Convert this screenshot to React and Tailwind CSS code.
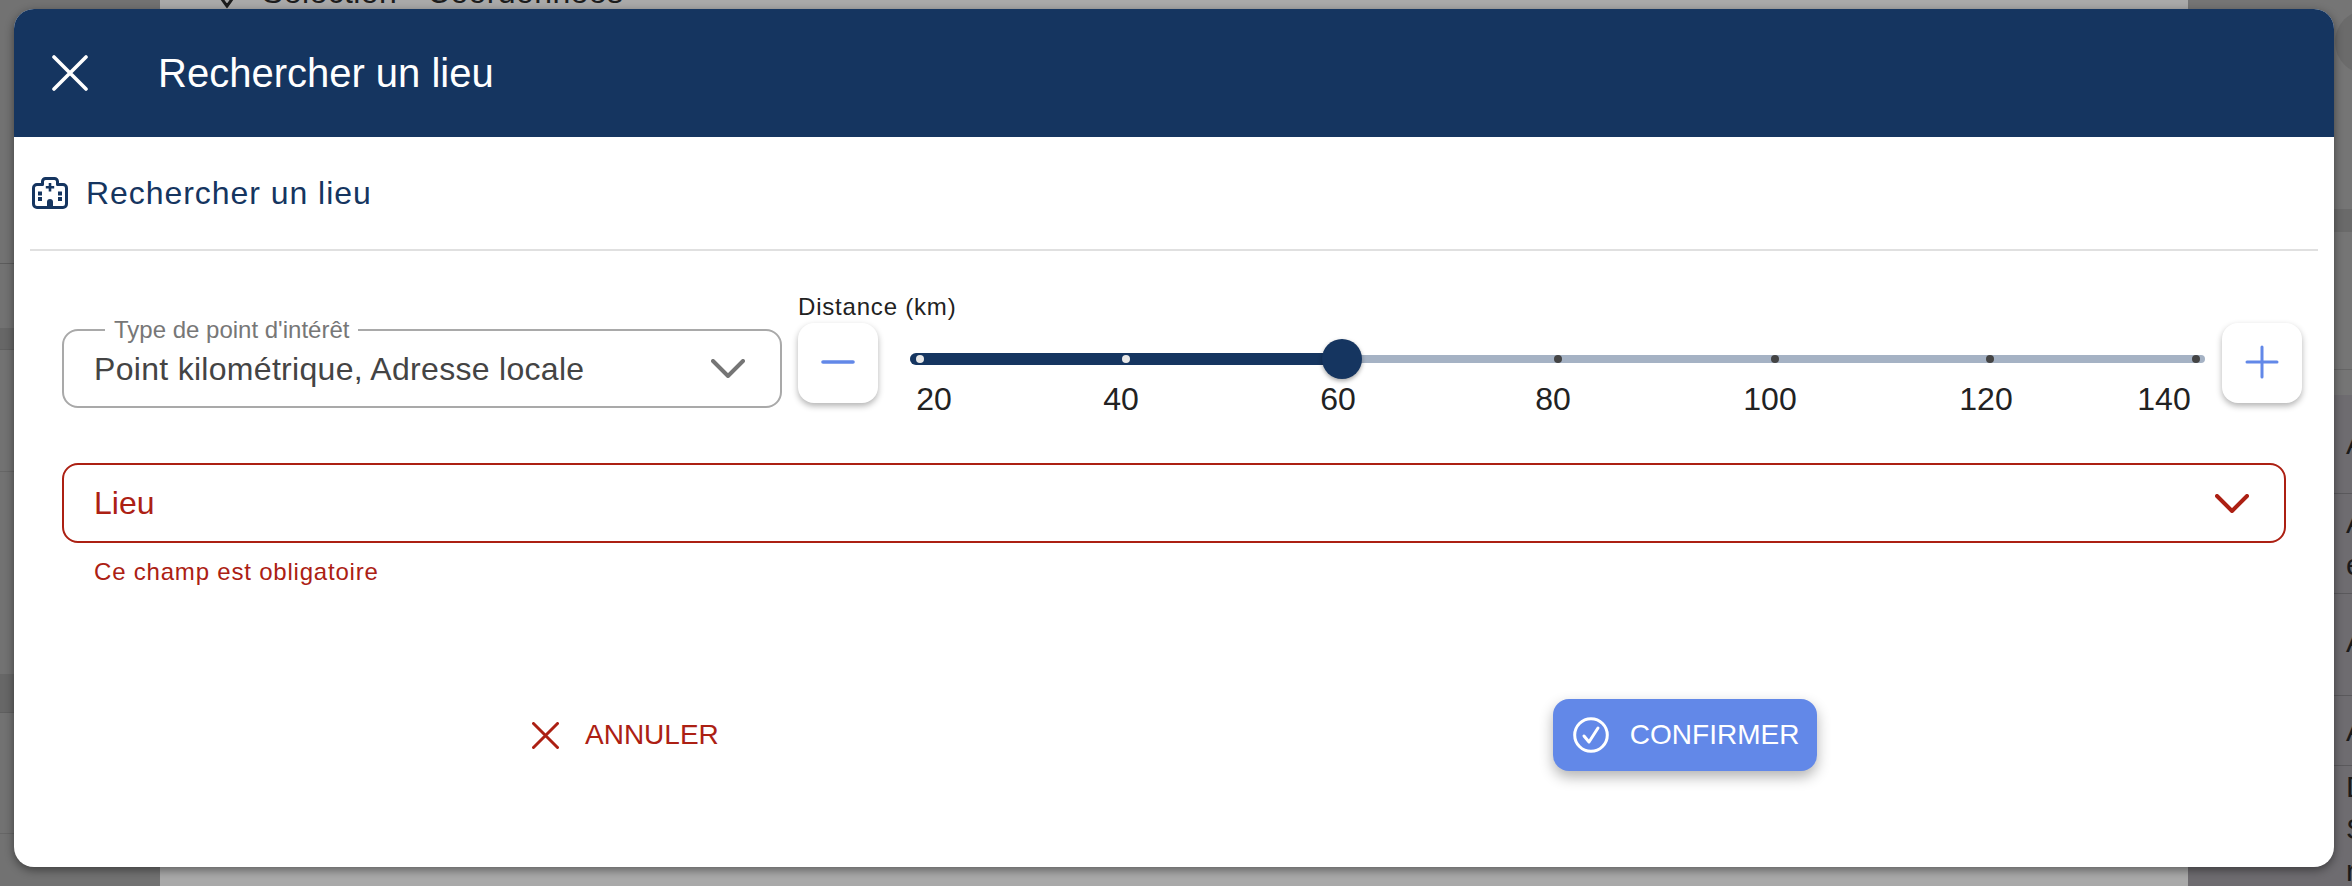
const marks = [
  { value: 20, dot: 10, label: 24, active: true },
  { value: 40, dot: 216, label: 211, active: true },
  { value: 60, dot: 432, label: 428, active: true },
  { value: 80, dot: 648, label: 643 },
  { value: 100, dot: 865, label: 860 },
  { value: 120, dot: 1080, label: 1076 },
  { value: 140, dot: 1286, label: 1254 },
];

function Chevron({ className }) {
  return (
    <svg width="34" height="19" viewBox="0 0 34 19" fill="none" className={className}>
      <path d="M2 2 L17 17 L32 2" stroke="currentColor" strokeWidth="4" strokeLinecap="round" strokeLinejoin="round" />
    </svg>
  );
}

function Cross({ size, width, className }) {
  return (
    <svg width={size} height={size} viewBox="0 0 36 36" fill="none" className={className}>
      <path d="M2 2 L34 34 M34 2 L2 34" stroke="currentColor" strokeWidth={width} strokeLinecap="round" />
    </svg>
  );
}

function HospitalIcon() {
  return (
    <svg width="36" height="32" viewBox="0 0 36 32" fill="none" className="text-[#153560]">
      <path
        d="M10.5 7.5 V4.5 a3 3 0 0 1 3-3 H22.5 a3 3 0 0 1 3 3 V7.5 H31 a3.5 3.5 0 0 1 3.5 3.5 V27 a3.5 3.5 0 0 1-3.5 3.5 H5 a3.5 3.5 0 0 1-3.5-3.5 V11 a3.5 3.5 0 0 1 3.5-3.5 Z"
        stroke="currentColor"
        strokeWidth="3"
        strokeLinejoin="round"
      />
      <path d="M18 6 V14.5 M13.8 10.3 H22.2" stroke="currentColor" strokeWidth="2.6" />
      <path d="M15 31 V25 a3 3 0 0 1 6 0 V31 Z" fill="currentColor" />
      <rect x="6" y="14.5" width="4" height="4" fill="currentColor" />
      <rect x="6" y="20" width="4" height="4" fill="currentColor" />
      <rect x="26" y="14.5" width="4" height="4" fill="currentColor" />
      <rect x="26" y="20" width="4" height="4" fill="currentColor" />
    </svg>
  );
}

function StepButton({ children }) {
  return (
    <button className="w-[80px] h-[80px] shrink-0 flex items-center justify-center rounded-[16px] bg-white text-[#6288e8] shadow-[0_3px_6px_rgba(0,0,0,0.3)]">
      {children}
    </button>
  );
}

function Slider() {
  return (
    <div className="relative flex-1 h-[80px] ml-[32px] mr-[15px]">
      <div className="absolute left-0 right-0 top-[32px] h-[8px] rounded-full bg-[#a5b2c4]" />
      <div className="absolute left-0 w-[432px] top-[30px] h-[12px] rounded-l-full bg-[#153560]" />
      {marks.map((mark) => (
        <div key={mark.value}>
          <div
            className={`absolute top-[32px] w-[8px] h-[8px] -translate-x-1/2 rounded-full ${
              mark.active ? "bg-[#e8e8e8]" : "bg-[#444444]"
            }`}
            style={{ left: mark.dot }}
          />
          <span
            className="absolute top-[58px] -translate-x-1/2 text-[32px] leading-[36px] text-[#222222]"
            style={{ left: mark.label }}
          >
            {mark.value}
          </span>
        </div>
      ))}
      <div className="absolute left-[432px] top-[16px] w-[40px] h-[40px] -translate-x-1/2 rounded-full bg-[#153560] shadow-[0_2px_4px_rgba(0,0,0,0.35)]" />
    </div>
  );
}

function Backdrop() {
  return (
    <div className="flex h-[886px] overflow-hidden">
      <div className="w-[160px] flex flex-col bg-[#727272]">
        <div className="h-[264px] shrink-0 border-b border-[#5c5c5c]" />
        <div className="h-[64px] shrink-0" />
        <div className="h-[22px] shrink-0 bg-[#676767] border-b border-[#5f5f5f]" />
        <div className="h-[122px] shrink-0 border-b border-[#666666]" />
        <div className="h-[202px] shrink-0" />
        <div className="h-[39px] shrink-0 bg-[#676767] border-b border-[#5f5f5f]" />
        <div className="h-[121px] shrink-0 border-b border-[#666666]" />
      </div>
      <div className="flex-1 bg-[#a9a9a9]">
        <div className="flex items-center gap-[22px] pl-[54px] -mt-[28px] h-[40px] text-[32px] tracking-[0.4px] text-[#1c1c1c]">
          <svg width="26" height="36" viewBox="0 0 26 36" fill="none" className="-mt-[2px]">
            <path d="M13 33 C6 24 2 18 2 12 a11 11 0 0 1 22 0 C24 18 20 24 13 33 Z" stroke="currentColor" strokeWidth="3" />
          </svg>
          <span className="whitespace-nowrap">Sélection - Coordonnées</span>
        </div>
      </div>
      <div className="w-[164px] flex flex-col overflow-hidden bg-[#757575] text-[30px] leading-[42px] text-[#1a1a1a]">
        <div className="h-[209px] shrink-0 relative overflow-hidden">
          <div className="absolute left-[147px] top-[10px] w-[64px] h-[64px] rounded-full bg-[#6b6b6b]" />
        </div>
        <div className="h-[23px] shrink-0 bg-[#6a6a6a]" />
        <div className="h-[138px] shrink-0 border-b border-[#666666]" />
        <div className="h-[25px] shrink-0" />
        <div className="flex-1 flex flex-col bg-[#6e6c70]">
          <div className="h-[99px] pl-[158px] shrink-0 flex items-center border-b border-[#5a595c]">A</div>
          <div className="h-[100px] pl-[158px] shrink-0 flex flex-col justify-center border-b border-[#5a595c]">
            <span>A</span>
            <span>e</span>
          </div>
          <div className="h-[102px] pl-[158px] pb-[6px] shrink-0 flex items-center border-b border-[#5a595c]">A</div>
          <div className="h-[70px] pl-[158px] shrink-0 flex items-center border-b border-[#5a595c]">A</div>
          <div className="pl-[158px]">
            <div>D</div>
            <div>S</div>
            <div>r</div>
          </div>
        </div>
      </div>
    </div>
  );
}

export default function App() {
  return (
    <div className="relative h-[886px] w-[2352px] overflow-hidden font-['Liberation_Sans',sans-serif]">
      <Backdrop />

      <div className="absolute left-[14px] top-[9px] w-[2320px] h-[858px] flex flex-col overflow-hidden rounded-[20px] bg-white shadow-[0_3px_10px_rgba(0,0,0,0.45)]">
        <div className="h-[128px] shrink-0 flex items-center gap-[70px] pl-[38px] bg-[#153560] text-white">
          <Cross size={36} width={3.6} />
          <h1 className="text-[40px] leading-[48px]">Rechercher un lieu</h1>
        </div>

        <div className="mx-[16px] h-[112px] flex items-center gap-[18px] pl-[2px] border-b-2 border-[#e0e0e0] box-content">
          <HospitalIcon />
          <span className="text-[32px] tracking-[0.95px] text-[#153560]">Rechercher un lieu</span>
        </div>

        <div className="flex-1 flex flex-col pl-[48px] pr-[32px]">
          <div className="flex items-start gap-[16px] pt-[42px]">
            <div className="relative mt-[36px] w-[720px] h-[79px] flex items-center justify-between pl-[30px] pr-[35px] rounded-[16px] border-2 border-[#a9a9a9]">
              <span className="absolute left-[41px] -top-[15px] px-[9px] bg-white text-[24px] leading-[28px] text-[#777777]">
                Type de point d'intérêt
              </span>
              <span className="text-[32px] tracking-[0.3px] text-[#444444]">Point kilométrique, Adresse locale</span>
              <Chevron className="text-[#757575]" />
            </div>

            <div className="flex-1 flex flex-col">
              <label className="h-[30px] text-[24px] leading-[28px] tracking-[0.8px] text-[#222222]">Distance (km)</label>
              <div className="flex items-start">
                <StepButton>
                  <svg width="34" height="34" viewBox="0 0 34 34" fill="none" className="mt-[-2px]">
                    <path d="M2 17 H32" stroke="currentColor" strokeWidth="3.6" strokeLinecap="round" />
                  </svg>
                </StepButton>
                <div className="flex-1 flex mr-[2px]">
                  <Slider />
                </div>
                <StepButton>
                  <svg width="34" height="34" viewBox="0 0 34 34" fill="none" className="mt-[-2px]">
                    <path d="M2 17 H32 M17 2 V32" stroke="currentColor" strokeWidth="3" strokeLinecap="round" />
                  </svg>
                </StepButton>
              </div>
            </div>
          </div>

          <div className="mt-[55px] mr-[16px] h-[80px] flex items-center justify-between pl-[30px] pr-[35px] rounded-[16px] border-2 border-[#ac2013] text-[#ac2013]">
            <span className="text-[32px]">Lieu</span>
            <Chevron />
          </div>
          <p className="mt-[14px] pl-[32px] text-[24px] leading-[30px] tracking-[0.8px] text-[#ac2013]">Ce champ est obligatoire</p>

          <div className="mt-[112px] flex items-center gap-[834px] pl-[470px]">
            <button className="flex items-center gap-[26px] text-[#ac2013]">
              <Cross size={27} width={4} />
              <span className="text-[28px]">ANNULER</span>
            </button>
            <button className="w-[264px] h-[72px] flex items-center gap-[21px] pl-[20px] rounded-[16px] bg-[#6288e8] text-white shadow-[0_6px_14px_rgba(0,0,0,0.3)]">
              <svg width="36" height="36" viewBox="0 0 36 36" fill="none">
                <circle cx="18" cy="18" r="16.3" stroke="currentColor" strokeWidth="3" />
                <path d="M11 19 L16 25 L25 11" stroke="currentColor" strokeWidth="3" strokeLinecap="round" strokeLinejoin="round" />
              </svg>
              <span className="text-[28px]">CONFIRMER</span>
            </button>
          </div>
        </div>
      </div>
    </div>
  );
}
